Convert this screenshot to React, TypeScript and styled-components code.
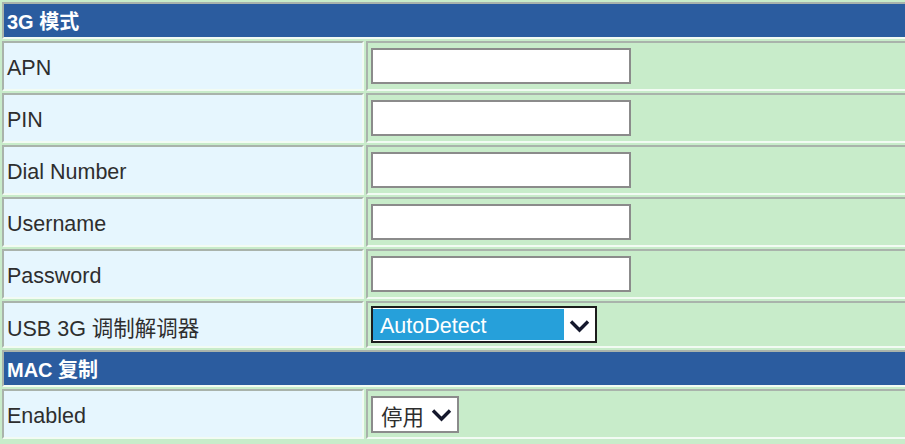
import React from 'react';
import styled, { createGlobalStyle } from 'styled-components';

const GlobalStyle = createGlobalStyle`
    html, body {
        margin: 0;
        padding: 0;
        background: #c8ecca;
    }
    body {
        font-family: "Liberation Sans", Arial, "Noto Sans CJK SC", sans-serif;
    }
`

const Frame = styled.div`
    width: 100%;
    overflow: hidden;
`

const Table = styled.table`
    width: calc(100% + 8px);
    border-collapse: separate;
    border-spacing: 2px;
    margin: 0;
    font-size: 21.5px;
    color: #2e2e2e;

    td {
        border-style: solid;
        border-width: 2px;
        border-color: #a9b3ab #f2fbf3 #f2fbf3 #a9b3ab;
        padding: 0;
    }
`

const SectionCell = styled.td`
    background: #2b5c9f;
    color: #ffffff;
    font-size: 20px;
    font-weight: bold;
    height: 33px;
    padding-left: 3px !important;
    vertical-align: middle;
    white-space: nowrap;
`

const LabelCell = styled.td<{ $h?: number }>`
    width: 355px;
    height: ${p => (p.$h ?? 46) - 4}px;
    background: #e6f6fe;
    padding: 4px 0 0 3px !important;
    vertical-align: middle;
    white-space: nowrap;
`

const ValueCell = styled.td`
    background: #c8ecca;
    padding-left: 3px !important;
    vertical-align: middle;
`

const TextInput = styled.input`
    display: block;
    box-sizing: border-box;
    width: 260px;
    height: 36px;
    margin: 0;
    border: 2px solid #8b8b8b;
    background: #ffffff;
    font: inherit;
    padding: 0 4px;
    outline: none;
`

const FakeSelect = styled.div<{ $focused?: boolean; $width: number }>`
    box-sizing: border-box;
    width: ${p => p.$width}px;
    height: 37px;
    display: flex;
    align-items: center;
    border: 2px solid ${p => (p.$focused ? '#1c1c1c' : '#8b8b8b')};
    background: #ffffff;
    padding: ${p => (p.$focused ? '1px 0 1px 0' : '0')};
`

const SelectValue = styled.span<{ $focused?: boolean }>`
    flex: 1;
    align-self: stretch;
    display: flex;
    align-items: center;
    padding: 3px 0 0 ${p => (p.$focused ? '7px' : '8px')};
    background: ${p => (p.$focused ? '#26a0da' : 'transparent')};
    color: ${p => (p.$focused ? '#ffffff' : '#2e2e2e')};
    font-size: 21.5px;
    white-space: nowrap;
`

const Arrow = styled.span`
    width: 31px;
    display: flex;
    justify-content: center;
    align-items: center;
    padding-top: 2px;
`

const Chevron = () => (
  <svg width="21" height="14" viewBox="0 0 21 14">
    <path d="M2 2.5 L10.5 11 L19 2.5" fill="none" stroke="#15182c" strokeWidth="3.4" />
  </svg>
)

const fields = ['APN', 'PIN', 'Dial Number', 'Username', 'Password'];

const App = () => {
  return (
    <Frame>
      <GlobalStyle />
      <Table>
        <tbody>
          <tr>
            <SectionCell colSpan={2}>3G 模式</SectionCell>
          </tr>
          {fields.map(f => (
            <tr key={f}>
              <LabelCell>{f}</LabelCell>
              <ValueCell>
                <TextInput type={f === 'Password' ? 'password' : 'text'} />
              </ValueCell>
            </tr>
          ))}
          <tr>
            <LabelCell $h={43}>USB 3G 调制解调器</LabelCell>
            <ValueCell>
              <FakeSelect $focused $width={226}>
                <SelectValue $focused>AutoDetect</SelectValue>
                <Arrow><Chevron /></Arrow>
              </FakeSelect>
            </ValueCell>
          </tr>
          <tr>
            <SectionCell colSpan={2}>MAC 复制</SectionCell>
          </tr>
          <tr>
            <LabelCell>Enabled</LabelCell>
            <ValueCell>
              <FakeSelect $width={88}>
                <SelectValue>停用</SelectValue>
                <Arrow><Chevron /></Arrow>
              </FakeSelect>
            </ValueCell>
          </tr>
        </tbody>
      </Table>
    </Frame>
  );
}

export default App;
